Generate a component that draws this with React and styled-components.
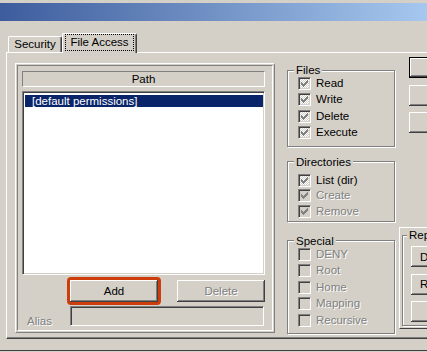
import React from "react";
import styled, { createGlobalStyle, css } from "styled-components";

const GlobalStyle = createGlobalStyle`
  html, body {
    margin: 0;
    padding: 0;
    background: #d4d0c8;
  }
  body {
    font-family: "Liberation Sans", Arial, sans-serif;
    font-size: 11.5px;
    color: #000;
    overflow: hidden;
  }
`;

const disabledText = css`
  color: #808080;
  text-shadow: 1px 1px 0 #fff;
`;

const Window = styled.div`
  width: 427px;
  height: 352px;
  overflow: hidden;
  display: flex;
  flex-direction: column;
  background: #d4d0c8;
`;

const TitleBar = styled.div`
  flex: none;
  height: 18px;
  margin-top: 3px;
  background: linear-gradient(to right, #3d5c9d, #a6c8ee);
`;

const TabStrip = styled.div`
  flex: none;
  display: flex;
  align-items: flex-end;
  height: 20px;
  margin: 12px 0 -1px;
  padding-left: 8px;
  position: relative;
  z-index: 1;
`;

const Tab = styled.div`
  box-sizing: border-box;
  display: flex;
  align-items: center;
  justify-content: center;
  width: ${(p) => p.$w}px;
  height: ${(p) => (p.$active ? 20 : 16)}px;
  margin-bottom: ${(p) => (p.$active ? 0 : 1)}px;
  background: #d4d0c8;
  border-top: 1px solid #fff;
  border-left: 1px solid #fff;
  border-right: 1px solid #404040;
  box-shadow: inset -1px 0 0 #808080;
  border-radius: 2px 2px 0 0;
  line-height: 13px;
`;

const FocusLabel = styled.span`
  padding: 1px 4px;
  border: 1px dotted #000;
  margin-top: -2px;
`;

const Panel = styled.div`
  flex: none;
  box-sizing: border-box;
  width: 480px;
  height: 287px;
  margin-left: 6px;
  border-top: 1px solid #fff;
  border-left: 1px solid #fff;
  border-bottom: 1px solid #404040;
  box-shadow: inset 0 -1px 0 #808080;
  display: flex;
  align-items: flex-start;
  padding: 4px 0 0 8px;
`;

const Footer = styled.div`
  flex: none;
  height: 11px;
  border-bottom: 1px solid #404040;
`;

const PathFrame = styled.div`
  flex: none;
  box-sizing: border-box;
  width: 260px;
  height: 270px;
  margin-top: 6px;
  border: 1px solid;
  border-color: #fff #808080 #808080 #fff;
  padding: 1px;
`;

const PathInner = styled.div`
  box-sizing: border-box;
  height: 100%;
  border: 1px solid;
  border-color: #808080 #fff #fff #808080;
  padding: 5px 7px 0 4px;
  display: flex;
  flex-direction: column;
`;

const ColumnHeader = styled.div`
  box-sizing: border-box;
  height: 16px;
  border: 1px solid;
  border-color: #808080 #fff #fff #808080;
  text-align: center;
  line-height: 14px;
`;

const ListBox = styled.div`
  box-sizing: border-box;
  height: 184px;
  margin-top: 4px;
  border: 1px solid;
  border-color: #808080 #fff #fff #808080;
  box-shadow: inset 1px 1px 0 #404040, inset -1px -1px 0 #d4d0c8;
  background: #fff;
  padding: 3px 1px 0 2px;
`;

const ListRow = styled.div`
  height: 12px;
  line-height: 12px;
  padding-left: 7px;
  color: ${(p) => (p.$selected ? "#fff" : "#000")};
  background: ${(p) => (p.$selected ? "#0a246a" : "transparent")};
`;

const ButtonRow = styled.div`
  display: flex;
  gap: 19px;
  margin-top: 5px;
  padding-left: 48px;
`;

const Highlight = styled.span`
  display: flex;
  margin: -3px;
  border: 3px solid #cc3d0b;
  border-radius: 4px;
`;

const Button = styled.button`
  box-sizing: border-box;
  flex: none;
  display: flex;
  align-items: center;
  justify-content: ${(p) => (p.$left ? "flex-start" : "center")};
  width: ${(p) => p.$w || 88}px;
  height: ${(p) => p.$h || 22}px;
  margin: 0;
  padding: ${(p) => (p.$left ? "0 0 0 9px" : "0")};
  font: inherit;
  color: #000;
  background: #d4d0c8;
  border: none;
  box-shadow: inset -1px -1px 0 #404040, inset 1px 1px 0 #fff,
    inset -2px -2px 0 #808080;
  white-space: nowrap;
  ${(p) => p.disabled && disabledText}
  ${(p) =>
    p.$default &&
    css`
      border: 1px solid #000;
    `}
`;

const AliasRow = styled.div`
  display: flex;
  align-items: flex-end;
  margin-top: 4px;
`;

const AliasLabel = styled.span`
  box-sizing: border-box;
  width: 48px;
  padding-left: 5px;
  line-height: 12px;
  margin-bottom: -1px;
  ${disabledText}
`;

const TextBox = styled.div`
  box-sizing: border-box;
  width: 194px;
  height: 20px;
  border: 1px solid;
  border-color: #808080 #fff #fff #808080;
  box-shadow: inset 1px 1px 0 #404040, inset -1px -1px 0 #d4d0c8;
  background: #d4d0c8;
`;

const Groups = styled.div`
  flex: none;
  width: 108px;
  margin: 6px 0 0 12px;
  display: flex;
  flex-direction: column;
`;

const GroupBox = styled.fieldset`
  box-sizing: border-box;
  min-width: 0;
  margin: ${(p) => p.$mt || 0}px 0 0;
  padding: ${(p) => p.$pt}px 0 ${(p) => p.$pb}px ${(p) => p.$pl || 10}px;
  border: 1px solid #808080;
  box-shadow: inset 1px 1px 0 #fff, 1px 1px 0 #fff;
`;

const Legend = styled.legend`
  padding: 0 2px;
  margin-left: -4px;
  line-height: 14px;
  background: #d4d0c8;
  white-space: nowrap;
`;

const Rows = styled.div`
  display: flex;
  flex-direction: column;
  gap: ${(p) => p.$gap}px;
`;

const CheckRow = styled.label`
  display: flex;
  align-items: center;
  gap: 5px;
  height: 13px;
  line-height: 13px;
  white-space: nowrap;
  ${(p) => p.$disabled && disabledText}
`;

const Box = styled.span`
  flex: none;
  box-sizing: border-box;
  width: 13px;
  height: 13px;
  border: 1px solid;
  border-color: #808080 #fff #fff #808080;
  box-shadow: inset 1px 1px 0 #404040, inset -1px -1px 0 #d4d0c8;
  background: ${(p) =>
    p.$dither
      ? "repeating-conic-gradient(#fff 0 25%, #d4d0c8 0 50%) 0 0 / 2px 2px"
      : "#d4d0c8"};
  display: flex;
  align-items: center;
  justify-content: center;
`;

const SideColumn = styled.div`
  flex: none;
  width: 110px;
  margin-left: 4px;
  display: flex;
  flex-direction: column;
`;

const ButtonStack = styled.div`
  display: flex;
  flex-direction: column;
  gap: 6.5px;
  padding-left: 10px;
`;

const RepFrame = styled.div`
  margin-top: 94px;
  border: 1px solid;
  border-color: #fff #404040 #404040 #fff;
  padding: 0 0 2px 2px;
`;

const CheckMark = () => (
  <svg width="7" height="7" viewBox="0 0 7 7" shapeRendering="crispEdges">
    <g fill="#808080">
      <rect x="6" y="0" width="1" height="1" />
      <rect x="5" y="1" width="2" height="1" />
      <rect x="0" y="2" width="1" height="1" />
      <rect x="4" y="2" width="3" height="1" />
      <rect x="0" y="3" width="2" height="1" />
      <rect x="3" y="3" width="3" height="1" />
      <rect x="0" y="4" width="5" height="1" />
      <rect x="1" y="5" width="3" height="1" />
      <rect x="2" y="6" width="1" height="1" />
    </g>
  </svg>
);

const Check = ({ label, checked, dither, disabled }) => (
  <CheckRow $disabled={disabled}>
    <Box $dither={dither}>{checked && <CheckMark />}</Box>
    {label}
  </CheckRow>
);

const files = ["Read", "Write", "Delete", "Execute"];
const special = ["DENY", "Root", "Home", "Mapping", "Recursive"];

export default function App() {
  return (
    <>
      <GlobalStyle />
      <Window>
        <TitleBar />
        <TabStrip>
          <Tab $w={54}>Security</Tab>
          <Tab $w={75} $active>
            <FocusLabel>File Access</FocusLabel>
          </Tab>
        </TabStrip>
        <Panel>
          <PathFrame>
            <PathInner>
              <ColumnHeader>Path</ColumnHeader>
              <ListBox>
                <ListRow $selected>[default permissions]</ListRow>
              </ListBox>
              <ButtonRow>
                <Highlight>
                  <Button $w={88}>Add</Button>
                </Highlight>
                <Button disabled>Delete</Button>
              </ButtonRow>
              <AliasRow>
                <AliasLabel>Alias</AliasLabel>
                <TextBox />
              </AliasRow>
            </PathInner>
          </PathFrame>

          <Groups>
            <GroupBox $pt={0} $pb={7}>
              <Legend>Files</Legend>
              <Rows $gap={3.33}>
                {files.map((f) => (
                  <Check key={f} label={f} checked dither />
                ))}
              </Rows>
            </GroupBox>
            <GroupBox $mt={8} $pt={5} $pb={3}>
              <Legend>Directories</Legend>
              <Rows $gap={2.5}>
                <Check label="List (dir)" checked dither />
                <Check label="Create" checked disabled />
                <Check label="Remove" checked disabled />
              </Rows>
            </GroupBox>
            <GroupBox $mt={12} $pt={0} $pb={6}>
              <Legend>Special</Legend>
              <Rows $gap={3.5}>
                {special.map((s) => (
                  <Check key={s} label={s} disabled />
                ))}
              </Rows>
            </GroupBox>
          </Groups>

          <SideColumn>
            <ButtonStack>
              <Button $w={75} $h={21} $default>
                OK
              </Button>
              <Button $w={75} $h={21}>
                Cancel
              </Button>
              <Button $w={75} $h={21}>
                Help
              </Button>
            </ButtonStack>
            <RepFrame>
              <GroupBox $pt={4} $pb={3} $pl={8}>
                <Legend>Replication</Legend>
                <Rows $gap={6.5}>
                  <Button $w={70} $h={21} $left>
                    Default
                  </Button>
                  <Button $w={70} $h={21} $left>
                    Rename
                  </Button>
                  <Button $w={70} $h={21} $left>
                    {" "}
                  </Button>
                </Rows>
              </GroupBox>
            </RepFrame>
          </SideColumn>
        </Panel>
        <Footer />
      </Window>
    </>
  );
}
